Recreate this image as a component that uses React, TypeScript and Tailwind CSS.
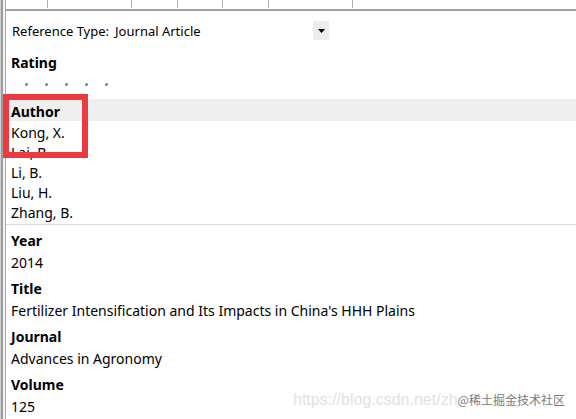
import React from "react";

const font = { fontFamily: '"Noto Sans", "Open Sans", sans-serif' };

function Field({ label, value }: { label: string; value: string }) {
  return (
    <div>
      <div className="h-[23px] leading-[23px] pt-[2px] font-bold text-[14px] pl-[5px]">{label}</div>
      <div className="h-[25px] leading-[22px] pt-[2px] text-[14px] pl-[5px]">{value}</div>
    </div>
  );
}

export default function App() {
  const authors = ["Kong, X.", "Lai, B.", "Li, B.", "Liu, H.", "Zhang, B."];
  return (
    <div className="relative w-[576px] h-[419px] overflow-hidden bg-white text-black flex" style={font}>
      {/* left border */}
      <div className="flex shrink-0 h-full">
        <div className="w-[1px] bg-[#d0d0d0]" />
        <div className="w-[2px] bg-[#9a9a9a]" />
        <div className="w-[2px] bg-[#f4f4f4]" />
        <div className="w-[1px] bg-[#a8a8a8]" />
      </div>
      <div className="flex-1 flex flex-col">
        {/* column header strip */}
        <div className="h-[11px] flex border-b-2 border-[#a0a0a0]">
          <div className="w-[42px] border-r border-[#b0b0b0] h-[8px]" />
          <div className="w-[84px] border-r border-[#b0b0b0] h-[8px]" />
          <div className="w-[46px] border-r border-[#b0b0b0] h-[8px]" />
          <div className="w-[45px] border-r border-[#b0b0b0] h-[8px]" />
          <div className="w-[46px] border-r border-[#b0b0b0] h-[8px]" />
          <div className="w-[84px] border-r border-[#b0b0b0] h-[8px]" />
        </div>
        {/* reference type */}
        <div className="h-[40px] flex items-center pl-[6px] pt-[2px] text-[13px]">
          <span>Reference Type:</span>
          <span className="ml-[6px]">Journal Article</span>
          <div className="ml-auto mr-[247px] -mt-[2px] w-[16px] h-[19px] bg-[#ededed] flex items-center justify-center">
            <svg width="7" height="4" viewBox="0 0 7 4">
              <path d="M0 0 H7 L3.5 4 Z" fill="#000" />
            </svg>
          </div>
        </div>
        <div className="h-[23px] leading-[23px] pt-[1px] font-bold text-[14px] pl-[5px]">Rating</div>
        <div className="h-[22px] flex items-center gap-[17px] pl-[19px] pt-[1px]">
          {[0, 1, 2, 3, 4].map((i) => (
            <div key={i} className="w-[3px] h-[3px] rounded-full bg-[#808080]" />
          ))}
        </div>
        <div className="h-[4px]" />
        <div className="h-[22px] leading-[22px] pt-[2px] bg-[#efefef] font-bold text-[14px] pl-[5px]">Author</div>
        {authors.map((a) => (
          <div key={a} className="h-[20px] leading-[20px] pt-[2px] text-[14px] pl-[5px]">{a}</div>
        ))}
        <div className="h-[3px]" />
        <div className="h-[1px] bg-[#dcdcdc]" />
        <div className="h-[2px]" />
        <Field label="Year" value="2014" />
        <Field label="Title" value="Fertilizer Intensification and Its Impacts in China's HHH Plains" />
        <Field label="Journal" value="Advances in Agronomy" />
        <Field label="Volume" value="125" />
      </div>

      {/* red highlight box */}
      <div className="absolute left-[3px] top-[94px] w-[85px] h-[64px] border-[6px] border-[#eb3a40]" />

      {/* watermark */}
      <div className="absolute left-[293px] top-[390px] flex items-center h-[20px]">
        <span className="text-[16px] text-[#e2e2e2]" style={{ fontFamily: '"Liberation Sans", sans-serif' }}>
          https://blog.csdn.net/zh
        </span>
        <span
          className="text-[12px] text-[#7a7a7a]"
          style={{ fontFamily: '"Noto Sans CJK SC", sans-serif' }}
        >
          @稀土掘金技术社区
        </span>
      </div>
    </div>
  );
}
